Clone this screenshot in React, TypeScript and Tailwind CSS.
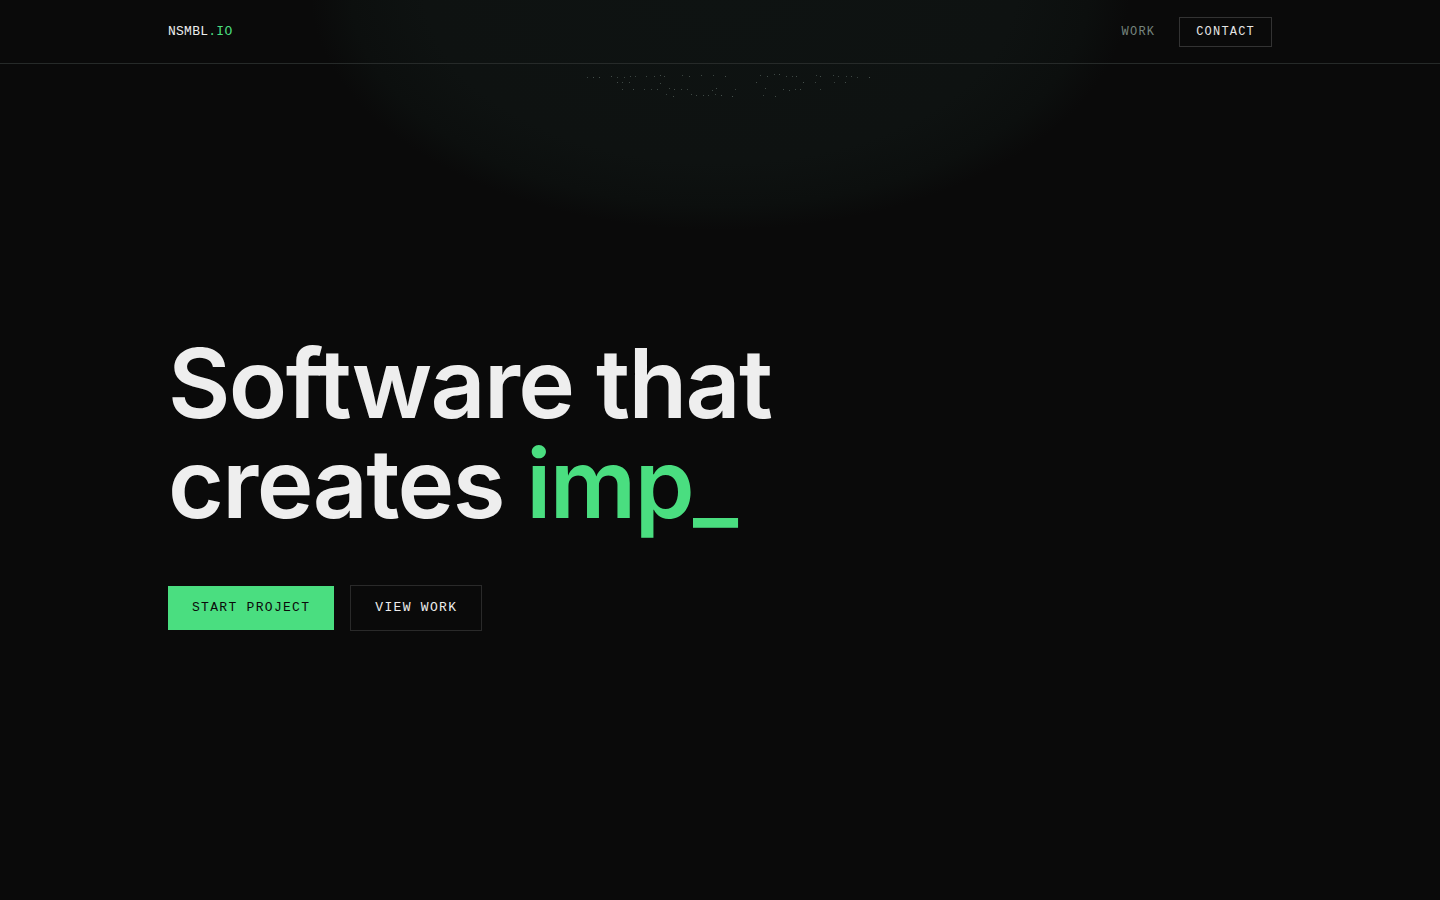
import React from "react";

function Dots() {
  const dots: { x: number; y: number; o: number }[] = [];
  let seed = 7;
  const rnd = () => {
    seed = (seed * 9301 + 49297) % 233280;
    return seed / 233280;
  };
  const rows = [
    { y: 13, x0: 6, x1: 296, p: 0.6 },
    { y: 18, x0: 30, x1: 270, p: 0.3 },
    { y: 24, x0: 40, x1: 240, p: 0.55 },
    { y: 30, x0: 80, x1: 200, p: 0.45 },
  ];
  rows.forEach((r, ri) => {
    for (let x = r.x0; x < r.x1; x += 6) {
      if (rnd() < r.p) {
        const c = (x - 150) / 150;
        const dy = ri === 0 ? -3 * (1 - c * c) : ri === 1 ? -1 * (1 - c * c) : 0;
        dots.push({ x: x + Math.round(rnd() * 2), y: r.y + Math.round(dy + rnd() * 2), o: 0.75 + rnd() * 0.25 });
      }
    }
  });
  return (
    <svg width="300" height="40" viewBox="0 0 300 40" className="block">
      {dots.map((d, i) => (
        <rect key={i} x={d.x} y={d.y} width="1" height="1" fill="#46514d" opacity={d.o} />
      ))}
    </svg>
  );
}

export default function App() {
  const mono = { fontFamily: '"Liberation Mono", "DejaVu Sans Mono", monospace' };
  return (
    <div className="relative min-h-screen w-full overflow-hidden bg-[#0a0a0a] text-[#ededed]" style={{ fontFamily: "Inter, sans-serif" }}>
      <div className="pointer-events-none absolute left-1/2 top-[-250px] h-[480px] w-[820px] -translate-x-1/2 rounded-[50%] bg-[radial-gradient(closest-side,#0e1312_0%,#0e1211_72%,#0c0f0e_90%,rgba(10,10,10,0)_100%)]" />
      <div className="pointer-events-none absolute left-[580px] top-[64px]">
        <Dots />
      </div>

      <header className="relative z-10 h-16 border-b border-[#262a29]">
        <div className="mx-auto flex h-full max-w-6xl items-center justify-between px-6" style={mono}>
          <div className="text-[13px] tracking-[0.02em] text-[#ededed]">
            NSMBL<span className="text-[#4ade80]">.IO</span>
          </div>
          <nav className="flex items-center gap-6 text-[12px] tracking-[0.1em]">
            <a className="text-[#76847d]">WORK</a>
            <a className="border border-[#333333] px-4 py-1.5 leading-4 text-[#e5e5e5]">CONTACT</a>
          </nav>
        </div>
      </header>

      <main className="relative z-10 flex h-[836px] flex-col justify-center">
        <div className="mx-auto w-full max-w-6xl px-6">
          <h1 className="text-[96px] font-semibold leading-[100px] tracking-[-0.017em] text-[#eeeeee]">
            Software that
            <br />
            creates <span className="text-[#4ade80]">imp_</span>
          </h1>
          <div className="mt-[52px] flex items-center gap-4 text-[13px] tracking-[0.1em]" style={mono}>
            <a className="bg-[#4ade80] px-6 py-3.5 leading-4 text-[#0a0a0a]">START PROJECT</a>
            <a className="border border-[#2a2a2a] px-6 py-3.5 leading-4 text-[#ededed]">VIEW WORK</a>
          </div>
        </div>
      </main>
    </div>
  );
}
